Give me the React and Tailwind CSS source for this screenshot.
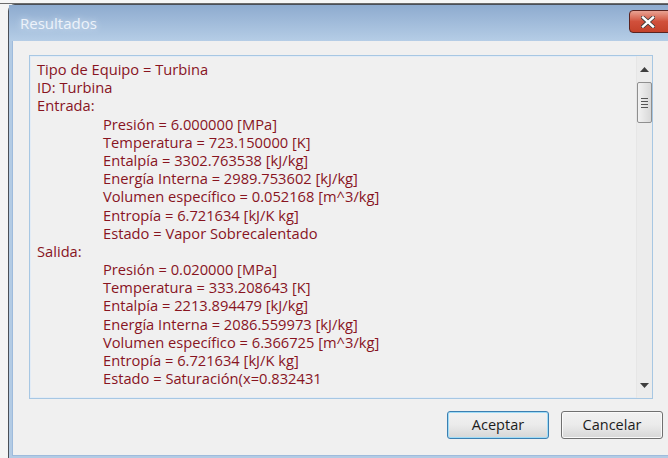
import React from 'react';

const entrada = [
  'Presión = 6.000000 [MPa]',
  'Temperatura = 723.150000 [K]',
  'Entalpía = 3302.763538 [kJ/kg]',
  'Energía Interna = 2989.753602 [kJ/kg]',
  'Volumen específico = 0.052168 [m^3/kg]',
  'Entropía = 6.721634 [kJ/K kg]',
  'Estado = Vapor Sobrecalentado',
];

const salida = [
  'Presión = 0.020000 [MPa]',
  'Temperatura = 333.208643 [K]',
  'Entalpía = 2213.894479 [kJ/kg]',
  'Energía Interna = 2086.559973 [kJ/kg]',
  'Volumen específico = 6.366725 [m^3/kg]',
  'Entropía = 6.721634 [kJ/K kg]',
  'Estado = Saturación(x=0.832431',
];

const Line = ({ children, indent }) => (
  <div className={`h-[18.2px] whitespace-nowrap ${indent ? 'pl-[66px]' : ''}`}>{children}</div>
);

const WinButton = ({ label, focused }) => (
  <button
    className={`h-[28px] w-[102px] rounded-[3px] border text-[14.5px] text-[#1c1c1c] bg-gradient-to-b from-[#f2f2f2] via-[#ebebeb] to-[#d6d6d6] ${
      focused ? 'border-[#3c7fb1] shadow-[inset_0_0_0_1px_#9fdcf7]' : 'border-[#707070] shadow-[inset_0_0_0_1px_#fafafa]'
    }`}
  >
    {label}
  </button>
);

export default function App() {
  return (
    <div
      className="relative h-[458px] w-[668px] overflow-hidden bg-[#f4f4f4]"
      style={{ fontFamily: '"Open Sans", "Noto Sans", sans-serif' }}
    >
      {/* desktop strip behind the dialog */}
      <div className="h-[4px] border-b border-[#6b6b6b] bg-[#f6f6f6]" />

      {/* dialog window, wider than the visible area */}
      <div className="ml-[8px] flex h-[454px] w-[700px] flex-col rounded-tl-[7px] border-l border-t border-[#4a4f57] bg-[#b3cbe4]">
        {/* title bar */}
        <div className="flex h-[36px] shrink-0 items-start bg-gradient-to-b from-[#8eabcf] to-[#b5cde6] pl-[11px]">
          <span className="mt-[7px] text-[15px] text-[#edf3fa] [text-shadow:0_0_6px_#dce8f5]">Resultados</span>
          <div className="ml-auto mr-[35px] mt-[5px] flex h-[23px] w-[44px] items-center justify-center rounded-[4px] border border-[#5a2320] bg-gradient-to-b from-[#e8a293] via-[#d1503b] to-[#c4412a]">
            <svg width="14" height="12" viewBox="0 0 14 12" className="-ml-[6px]">
              <path d="M2 1.5 L12 10.5 M12 1.5 L2 10.5" stroke="#3a3a3a" strokeWidth="4" strokeLinecap="square" />
              <path d="M2 1.5 L12 10.5 M12 1.5 L2 10.5" stroke="#ffffff" strokeWidth="2.4" strokeLinecap="square" />
            </svg>
          </div>
        </div>

        {/* client area */}
        <div className="mb-[2px] ml-[3px] flex flex-1 flex-col border-b border-l border-[#9ebbdc] bg-[#f0f0f0] pl-[16px] pt-[14px]">
          <div className="flex h-[344px] w-[624px] border border-[#a7c7e3] bg-[#f0f0f0] shadow-[inset_0_0_0_1px_#e3ecf6]">
            <div className="flex-1 pl-[7px] pt-[4px] text-[14.7px] leading-[18.2px] text-[#88141f]">
              <Line>Tipo de Equipo = Turbina</Line>
              <Line>ID: Turbina</Line>
              <Line>Entrada:</Line>
              {entrada.map((t) => (
                <Line key={'e' + t} indent>{t}</Line>
              ))}
              <Line>Salida:</Line>
              {salida.map((t) => (
                <Line key={'s' + t} indent>{t}</Line>
              ))}
            </div>
            {/* scrollbar */}
            <div className="flex w-[16px] flex-col items-center border-l border-[#e6e6e6] bg-[#ececec]">
              <div className="flex h-[26px] items-center justify-center">
                <svg width="9" height="5" viewBox="0 0 9 5">
                  <path d="M0 5 L4.5 0 L9 5 Z" fill="#3f3f3f" />
                </svg>
              </div>
              <div className="flex h-[41px] w-[15px] items-center justify-center rounded-[2px] border border-[#8f8f8f] bg-gradient-to-r from-[#f2f2f2] to-[#d8d8d8]">
                <div className="flex w-[7px] flex-col gap-[2px]">
                  <div className="h-[1px] bg-[#555]" />
                  <div className="h-[1px] bg-[#555]" />
                  <div className="h-[1px] bg-[#555]" />
                  <div className="h-[1px] bg-[#555]" />
                </div>
              </div>
              <div className="flex-1" />
              <div className="flex h-[26px] items-center justify-center">
                <svg width="9" height="5" viewBox="0 0 9 5">
                  <path d="M0 0 L4.5 5 L9 0 Z" fill="#3f3f3f" />
                </svg>
              </div>
            </div>
          </div>

          <div className="ml-[418px] mt-[12px] flex gap-[12px]">
            <WinButton label="Aceptar" focused />
            <WinButton label="Cancelar" />
          </div>
        </div>
      </div>
    </div>
  );
}
